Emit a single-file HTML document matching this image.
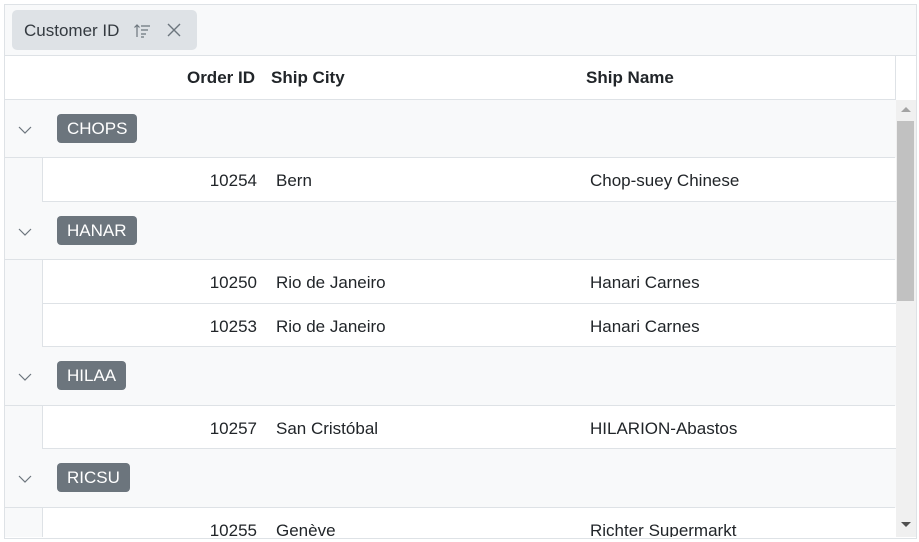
<!DOCTYPE html>
<html><head><style>
body{margin:0;width:919px;height:542px;background:#fff;font-family:"Liberation Sans",sans-serif;overflow:hidden;position:relative}
.a{position:absolute}
.clip{position:absolute;left:5px;top:100px;width:891px;height:437px;overflow:hidden;background:#f8f9fa}
.grp{position:absolute;left:0;width:890px;background:#f8f9fa;border-bottom:1px solid #dee2e6}
.row{position:absolute;left:37px;width:853px;background:#fff;border-left:1px solid #dee2e6;border-bottom:1px solid #dee2e6;font-size:17px;color:#212529}
.row span{position:absolute;top:13px}
.badge{position:absolute;left:52px;background:#6c757d;color:#fff;font-size:17px;border-radius:4px;padding:0 10px;height:29px;line-height:29px}
.chev{position:absolute;left:13px;width:14px;height:14px}
</style></head><body>
<div class="a" style="left:4px;top:4px;width:911px;height:533px;border:1px solid #dee2e6"></div>
<div class="a" style="left:5px;top:5px;width:911px;height:50px;background:#f8f9fa;border-bottom:1px solid #dee2e6"></div>
<div class="a" style="left:12px;top:10px;width:185px;height:40px;background:#dee2e6;border-radius:5px"></div>
<div class="a" style="left:24px;top:21px;font-size:17px;color:#343a40">Customer ID</div>
<svg class="a" style="left:133px;top:23px" width="18" height="16" viewBox="0 0 18 16" fill="none" stroke="#6c757d" stroke-width="1.2"><path d="M4 14V2M1.5 4.5L4 2l2.5 2.5M8 3h9M8 7h7M8 11h5M8 14h3"/></svg>
<svg class="a" style="left:167px;top:23px" width="14" height="14" viewBox="0 0 14 14" stroke="#6c757d" stroke-width="1.4"><path d="M1 1l12 12M13 1L1 13"/></svg>
<div class="a" style="left:5px;top:56px;width:890px;height:43px;border-bottom:1px solid #dee2e6;border-right:1px solid #dee2e6;background:#fff;font-weight:bold;font-size:17px;color:#212529">
<span class="a" style="right:640px;top:12px">Order ID</span>
<span class="a" style="left:266px;top:12px">Ship City</span>
<span class="a" style="left:581px;top:12px">Ship Name</span></div>

<div class="clip">
<div class="grp" style="top:0;height:57px"><svg class="chev" style="top:23px" viewBox="0 0 14 14" fill="none" stroke="#6c757d" stroke-width="1.2"><path d="M1 4l6 6 6-6"/></svg><div class="badge" style="top:14px">CHOPS</div></div>
<div class="row" style="top:58px;height:43px"><span style="right:639px">10254</span><span style="left:233px">Bern</span><span style="left:547px">Chop-suey Chinese</span></div>

<div class="grp" style="top:102px;height:57px"><svg class="chev" style="top:23px" viewBox="0 0 14 14" fill="none" stroke="#6c757d" stroke-width="1.2"><path d="M1 4l6 6 6-6"/></svg><div class="badge" style="top:14px">HANAR</div></div>
<div class="row" style="top:160px;height:43px"><span style="right:639px">10250</span><span style="left:233px">Rio de Janeiro</span><span style="left:547px">Hanari Carnes</span></div>
<div class="row" style="top:204px;height:42px"><span style="right:639px">10253</span><span style="left:233px">Rio de Janeiro</span><span style="left:547px">Hanari Carnes</span></div>

<div class="grp" style="top:247px;height:58px"><svg class="chev" style="top:23px" viewBox="0 0 14 14" fill="none" stroke="#6c757d" stroke-width="1.2"><path d="M1 4l6 6 6-6"/></svg><div class="badge" style="top:14px">HILAA</div></div>
<div class="row" style="top:306px;height:42px"><span style="right:639px">10257</span><span style="left:233px">San Cristóbal</span><span style="left:547px">HILARION-Abastos</span></div>

<div class="grp" style="top:349px;height:58px"><svg class="chev" style="top:23px" viewBox="0 0 14 14" fill="none" stroke="#6c757d" stroke-width="1.2"><path d="M1 4l6 6 6-6"/></svg><div class="badge" style="top:14px">RICSU</div></div>
<div class="row" style="top:408px;height:40px"><span style="right:639px">10255</span><span style="left:233px">Genève</span><span style="left:547px">Richter Supermarkt</span></div>
</div>

<div class="a" style="left:896px;top:100px;width:20px;height:437px;background:#f0f0f0"></div>
<div class="a" style="left:897px;top:121px;width:17px;height:180px;background:#c1c1c1"></div>
<div class="a" style="left:901px;top:107px;width:0;height:0;border-left:5px solid transparent;border-right:5px solid transparent;border-bottom:5px solid #a3a3a3"></div>
<div class="a" style="left:901px;top:522px;width:0;height:0;border-left:5px solid transparent;border-right:5px solid transparent;border-top:5px solid #505050"></div>
</body></html>
